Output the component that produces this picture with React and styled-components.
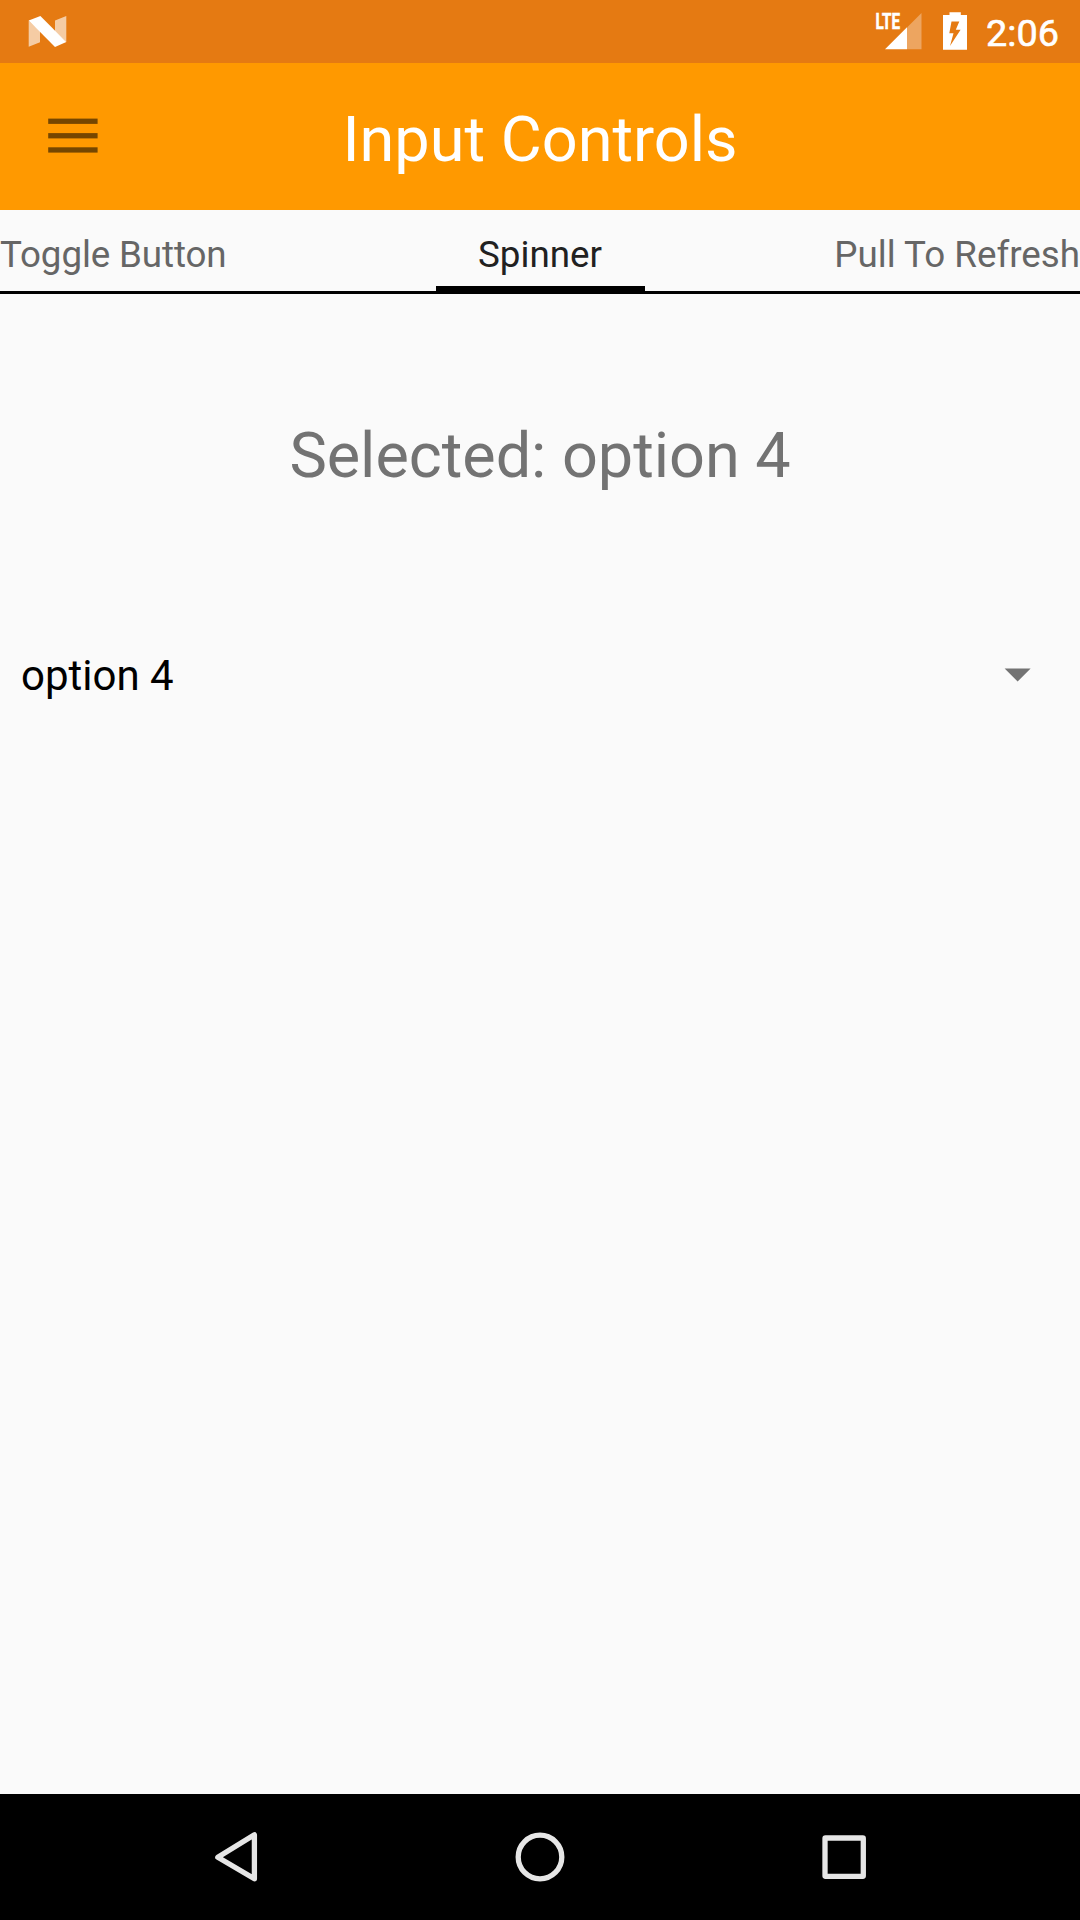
import React from 'react';
import styled, { createGlobalStyle } from 'styled-components';

const GlobalStyle = createGlobalStyle`
  body { margin: 0; background: #fafafa; }
  * { box-sizing: border-box; }
`;

const Screen = styled.div`
  width: 1080px;
  height: 1920px;
  display: flex;
  flex-direction: column;
  overflow: hidden;
  background: #fafafa;
  font-family: Roboto, "Liberation Sans", sans-serif;
`;

const StatusBar = styled.header`
  height: 63px;
  display: flex;
  justify-content: space-between;
  background: #e57a12;
  padding: 0 21px 0 28px;
`;

const StatusGroup = styled.div`
  display: flex;
`;

const Clock = styled.time`
  margin-left: 18px;
  padding-top: 1px;
  font-size: 37.8px;
  -webkit-text-stroke: 0.6px #fff;
  line-height: 64px;
  color: #fff;
`;

const NetworkLabel = styled.text`
  font-family: Roboto, sans-serif;
  font-size: 22px;
  font-weight: 700;
  fill: #fff;
  stroke: #fff;
  stroke-width: 0.6;
`;

const AppBar = styled.div`
  height: 147px;
  display: grid;
  grid-template-columns: 147px 1fr 147px;
  background: #ff9900;
`;

const MenuButton = styled.button`
  border: 0;
  padding: 0;
  background: transparent;
  display: flex;
`;

const Title = styled.h1`
  margin: 0;
  padding-top: 3px;
  text-align: center;
  font-size: 63px;
  font-weight: 400;
  line-height: 147px;
  color: #fff;
`;

const TabStrip = styled.nav`
  height: 84px;
  display: grid;
  grid-template-columns: 1fr 209px 1fr;
  border-bottom: 3px solid #000;
`;

const Tab = styled.div`
  text-align: ${(p) => p.$align};
  font-size: 36.75px;
  letter-spacing: ${(p) => p.$tracking || 'normal'};
  line-height: 76px;
  padding-top: 7px;
  height: 81px;
  white-space: nowrap;
  color: ${(p) => (p.$active ? '#212121' : '#666')};
  border-bottom: ${(p) => (p.$active ? '5px solid #000' : '0')};
`;

const Content = styled.main`
  flex: 1;
  display: flex;
  flex-direction: column;
`;

const Selected = styled.p`
  margin: 125px 0 0;
  text-align: center;
  font-size: 63px;
  letter-spacing: -0.04px;
  line-height: 74px;
  color: #737373;
`;

const Spinner = styled.div`
  margin-top: 120px;
  height: 126px;
  padding: 0 49px 0 21px;
  display: flex;
  align-items: center;
  justify-content: space-between;
  font-size: 42px;
  line-height: 50px;
  color: #000;
`;

const Caret = styled.svg`
  width: 27px;
  height: 14px;
  margin-bottom: 2px;
  fill: #737373;
`;

const NavBar = styled.footer`
  height: 126px;
  display: grid;
  grid-template-columns: repeat(3, 304px);
  justify-content: center;
  justify-items: center;
  align-items: center;
  background: #000;
`;

const NavIcon = styled.svg`
  width: 60px;
  height: 60px;
  fill: none;
  stroke: #e6e6e6;
  stroke-width: 5.3;
  stroke-linejoin: round;
`;

const TABS = [
  { label: 'Toggle Button', align: 'left', tracking: '-0.12px' },
  { label: 'Spinner', align: 'center', active: true },
  { label: 'Pull To Refresh', align: 'right' },
];

export default function App() {
  return (
    <Screen>
      <GlobalStyle />
      <StatusBar>
        <svg width="40" height="63" viewBox="28 0 40 63">
          <path fill="#fff" fillOpacity=".62" d="M28.7 20.5 40 31v11.2L28.7 46.8ZM55 20.4 66.3 16v26L55 31.5Z" />
          <path fill="#fff" d="M28.7 20.6 40.4 16 66.3 42 55 47Z" />
        </svg>
        <StatusGroup>
          <svg width="94" height="63" viewBox="874 0 94 63">
            <path fill="#fff" fillOpacity=".33" d="M907 27.5 921.5 13v36.2H907Z" />
            <path fill="#fff" d="M885 49.2 907 27.2v22Z" />
            <NetworkLabel x="875.5" y="29.3" textLength="24.5" lengthAdjust="spacingAndGlyphs">LTE</NetworkLabel>
            <path
              fill="#fff"
              fillRule="evenodd"
              d="M949.5 12.3h11.3V15h6.2v34.7H943V15h6.5ZM951.5 21.5 949.3 33.2h4.2L950 46l10.6-16.2h-4.8l3.5-8.3Z"
            />
          </svg>
          <Clock>2:06</Clock>
        </StatusGroup>
      </StatusBar>
      <AppBar>
        <MenuButton aria-label="Menu">
          <svg width="147" height="147" viewBox="0 63 147 147" fill="#000" fillOpacity=".54">
            <rect x="48.2" y="118.6" width="49.4" height="5.3" />
            <rect x="48.2" y="133.1" width="49.4" height="5.3" />
            <rect x="48.2" y="147.3" width="49.4" height="5.3" />
          </svg>
        </MenuButton>
        <Title>Input Controls</Title>
      </AppBar>
      <TabStrip>
        {TABS.map((t) => (
          <Tab key={t.label} $align={t.align} $active={t.active} $tracking={t.tracking}>
            {t.label}
          </Tab>
        ))}
      </TabStrip>
      <Content>
        <Selected>Selected: option 4</Selected>
        <Spinner>
          <span>option 4</span>
          <Caret viewBox="0 0 27 14">
            <path d="M.6.4h26L13.6 13.4Z" />
          </Caret>
        </Spinner>
      </Content>
      <NavBar>
        <NavIcon viewBox="206 1827 60 60">
          <path d="M254.4 1834.8v44L217.8 1857.3Z" />
        </NavIcon>
        <NavIcon viewBox="510 1827 60 60">
          <circle cx="540" cy="1857" r="21.8" />
        </NavIcon>
        <NavIcon viewBox="814 1827 60 60">
          <rect x="825" y="1838" width="38.3" height="38.3" rx=".5" />
        </NavIcon>
      </NavBar>
    </Screen>
  );
}
